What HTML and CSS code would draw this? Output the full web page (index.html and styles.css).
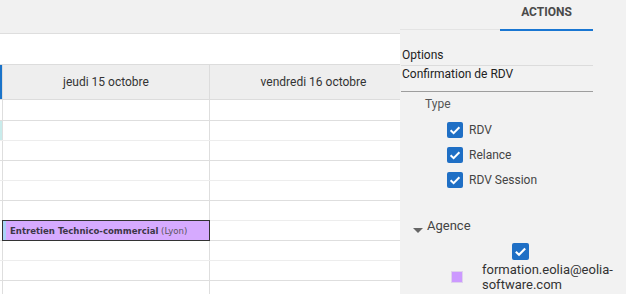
FILE: index.html
```html
<!DOCTYPE html>
<html lang="fr">
<head>
<meta charset="utf-8">
<title>Planning</title>
<link rel="stylesheet" href="styles.css">
</head>
<body>
<div class="app">
  <main class="cal">
    <div class="topbar"></div>
    <div class="toolbar"></div>
    <div class="cal-head">
      <div class="head-gutter"></div>
      <div class="head-day">jeudi 15 octobre</div>
      <div class="head-day">vendredi 16 octobre</div>
    </div>
    <div class="cal-body">
      <div class="row first hour"><div class="gut"></div><div class="cell"></div><div class="cell"></div></div>
      <div class="row"><div class="gut now"></div><div class="cell"></div><div class="cell"></div></div>
      <div class="row hour"><div class="gut"></div><div class="cell"></div><div class="cell"></div></div>
      <div class="row"><div class="gut"></div><div class="cell"></div><div class="cell"></div></div>
      <div class="row hour"><div class="gut"></div><div class="cell"></div><div class="cell"></div></div>
      <div class="row"><div class="gut"></div><div class="cell"></div><div class="cell"></div></div>
      <div class="row hour"><div class="gut"></div><div class="cell"></div><div class="cell"></div></div>
      <div class="row"><div class="gut"></div><div class="cell"></div><div class="cell"></div></div>
      <div class="row hour"><div class="gut"></div><div class="cell"></div><div class="cell"></div></div>
      <div class="row"><div class="gut"></div><div class="cell"></div><div class="cell"></div></div>
      <div class="event"><span class="ev-title">Entretien Technico-commercial</span> <span class="ev-loc">(Lyon)</span></div>
    </div>
  </main>
  <aside class="panel">
    <div class="tabs">
      <div class="tab-blank"></div>
      <div class="tab">ACTIONS</div>
    </div>
    <div class="opt-row">Options</div>
    <div class="confirm">Confirmation de RDV</div>
    <div class="type-label">Type</div>
    <div class="check-list">
      <div class="check-row"><span class="cbx"><svg viewBox="0 0 16 16"><path d="M3.6 8.2 L6.6 11.1 L12.4 5.2"/></svg></span><span>RDV</span></div>
      <div class="check-row"><span class="cbx"><svg viewBox="0 0 16 16"><path d="M3.6 8.2 L6.6 11.1 L12.4 5.2"/></svg></span><span>Relance</span></div>
      <div class="check-row"><span class="cbx"><svg viewBox="0 0 16 16"><path d="M3.6 8.2 L6.6 11.1 L12.4 5.2"/></svg></span><span>RDV Session</span></div>
    </div>
    <div class="agence"><svg class="caret" viewBox="0 0 10 5"><polygon points="0,0 10,0 5,5"/></svg><span>Agence</span></div>
    <div class="agence-check"><span class="cbx big"><svg viewBox="0 0 16 16"><path d="M3.6 8.2 L6.6 11.1 L12.4 5.2"/></svg></span></div>
    <div class="agent">
      <span class="swatch"></span>
      <span class="agent-name">formation.eolia@eolia-software.com</span>
    </div>
  </aside>
</div>
</body>
</html>
```
FILE: styles.css
```css
html, body {
  margin: 0;
  padding: 0;
}
body {
  width: 626px;
  height: 294px;
  overflow: hidden;
  background: #f2f2f2;
  font-family: Roboto, "Liberation Sans", sans-serif;
  font-size: 12px;
  color: #333;
}
.app {
  display: flex;
  height: 294px;
}
.cal {
  width: 400px;
  flex: none;
  overflow: hidden;
  background: #fff;
}
.topbar {
  height: 33px;
  background: #f1f1f1;
  border-bottom: 1px solid #dedede;
}
.toolbar {
  height: 30px;
  background: #fff;
}
.cal-head {
  display: grid;
  grid-template-columns: 2px 207px 208px;
  height: 34px;
  border-top: 1px solid #dcdcdc;
  border-bottom: 1px solid #dcdcdc;
  background: #eeeeee;
}
.head-gutter {
  background: #1a73c9;
}
.head-day {
  border-left: 1px solid #dcdcdc;
  display: flex;
  align-items: center;
  justify-content: center;
  color: #333;
  font-size: 12px;
}
.cal-body {
  position: relative;
}
.row {
  display: grid;
  grid-template-columns: 2px 207px 208px;
  height: 19px;
  border-bottom: 1px solid #ededed;
}
.row.hour {
  border-bottom-color: #dedede;
}
.row.first {
  height: 20px;
}
.gut.now {
  background: #c9ecec;
}
.cell {
  border-left: 1px solid #dedede;
}
.event {
  position: absolute;
  top: 120px;
  left: 2px;
  width: 208px;
  height: 21px;
  box-sizing: border-box;
  border: 1px solid #333;
  border-left-width: 1px;
  background: #d6aaff;
  box-shadow: inset 3px 0 0 #a9d3f7;
  padding-left: 7px;
  font-family: "DejaVu Sans Condensed", "DejaVu Sans", sans-serif;
  font-stretch: condensed;
  font-size: 9.5px;
  line-height: 19px;
  white-space: nowrap;
  overflow: hidden;
  color: #3b3646;
}
.ev-title {
  font-weight: bold;
}
.ev-loc {
  color: #5a5560;
}
.panel {
  width: 226px;
  flex: none;
  background: #f2f2f2;
}
.tabs {
  display: flex;
  align-items: flex-start;
  width: 193px;
}
.tab-blank {
  width: 100px;
  height: 29px;
  border-bottom: 1px solid #e4e4e4;
}
.tab {
  width: 93px;
  height: 29px;
  border-bottom: 2px solid #1976d2;
  text-align: center;
  font-weight: bold;
  font-size: 12px;
  line-height: 24px;
  color: #4a4a4a;
}
.opt-row {
  margin-top: 14px;
  margin-left: 1px;
  width: 191px;
  padding-left: 1px;
  line-height: 20px;
  border-bottom: 1px solid #dcdcdc;
  color: #222;
}
.confirm {
  margin-left: 1px;
  width: 191px;
  padding-left: 1px;
  line-height: 16px;
  padding-bottom: 9px;
  border-bottom: 1px solid #9e9e9e;
  color: #222;
}
.type-label {
  margin-top: 4px;
  padding-left: 25px;
  line-height: 16px;
  color: #555;
}
.check-list {
  margin-top: 5px;
  padding-left: 47px;
}
.check-row {
  display: flex;
  align-items: center;
  height: 25px;
  gap: 6px;
  color: #444;
}
.cbx {
  width: 16px;
  height: 16px;
  border-radius: 2px;
  background: #1f6fc5;
  display: inline-flex;
  flex: none;
}
.cbx svg {
  width: 16px;
  height: 16px;
}
.cbx path {
  fill: none;
  stroke: #fff;
  stroke-width: 2;
}
.cbx.big {
  width: 17px;
  height: 17px;
}
.cbx.big svg {
  width: 17px;
  height: 17px;
}
.agence {
  margin-top: 24px;
  display: flex;
  align-items: center;
  height: 18px;
  padding-left: 13px;
  gap: 4px;
  font-size: 13px;
  color: #444;
}
.caret {
  width: 10px;
  height: 5px;
  margin-top: 10px;
  fill: #666;
}
.agence-check {
  margin-top: 9px;
  padding-left: 112px;
  height: 17px;
}
.agent {
  margin-top: 2px;
  display: flex;
  align-items: center;
  padding-left: 51px;
}
.swatch {
  width: 10px;
  height: 10px;
  background: #cc99ff;
  border: 1px solid #dfd3ec;
  margin-right: 19px;
  flex: none;
}
.agent-name {
  width: 140px;
  font-size: 13px;
  line-height: 15px;
  color: #333;
}
```
